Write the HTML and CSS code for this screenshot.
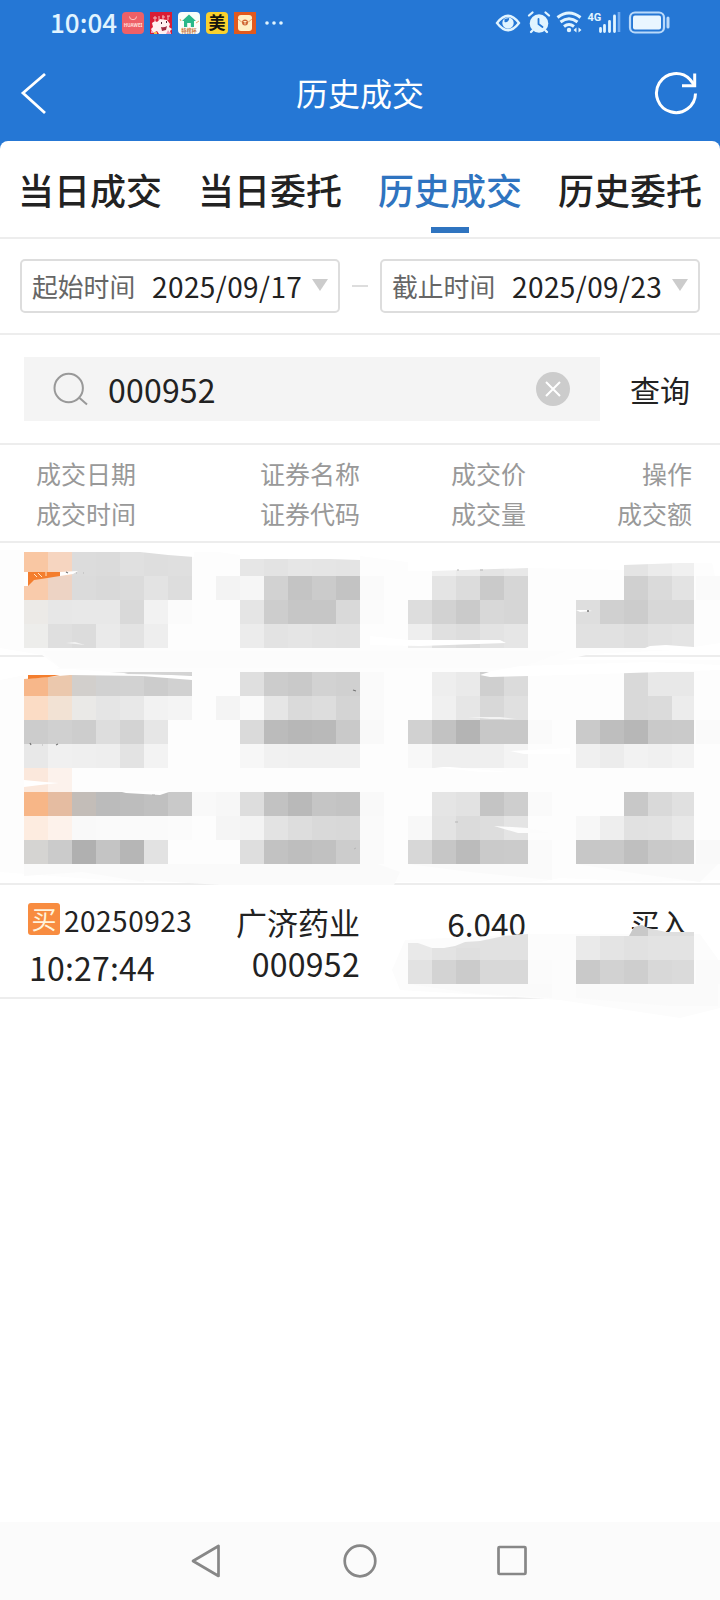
FILE: index.html
```
<!DOCTYPE html>
<html lang="zh-CN">

<head>
    <meta charset="utf-8">
    <meta name="viewport" content="width=device-width, initial-scale=1.0">
    <title>历史成交</title>
    <link rel="stylesheet" href="styles.css">
</head>

<body>
    <header>
        <div class="status-bar">
            <span class="clock">10:04</span>
            <div class="app-icons">
                <svg width="22" height="22" viewBox="0 0 22 22">
                    <rect width="22" height="22" rx="4" fill="#ee6067" />
                    <path d="M7.500 4.500q0 3.200 3.500 3.200t3.500-3.200" fill="none" stroke="#ffc9c4" />
                    <text x="11" y="14.500" class="tiny-latin">HUAWEI</text>
                </svg>
                <svg width="22" height="22" viewBox="0 0 22 22">
                    <rect width="22" height="22" fill="#d91c34" />
                    <path d="M3 6h4M5 4v5M9 4v4M12 5h3M13 3v5M17 4h3M18 4v4" stroke="#f5b7b9" />
                    <path d="M2 11l3-2 2 1 3-3 7 1 3 4-1 3 3 2-2 2 1 3H9l-2-3-4 2-2-4 2-2z" fill="#fff0f0" />
                    <path d="M11 15q3 1 6-1l-1 4-4 1z" fill="#9f2940" />
                    <path d="M11 11h1M16 10h1" stroke="#542638" stroke-width="2" />
                    <path d="M1 21v-3l3 3zM16 22l2-4 3 4z" fill="#ed9ab4" />
                    <path d="M4 20h3v2H4z" fill="#f5c451" />
                </svg>
                <svg width="22" height="22" viewBox="0 0 22 22">
                    <rect width="22" height="22" rx="4" fill="#fafdf9" />
                    <path d="M11 2.500l7 6.500h-2v6h-3.200v-4H9.200v4H6V9H4z" fill="#29b889" />
                    <path d="M2 7l1 2M18 11l3-2" stroke="#eba66a" />
                    <text x="11" y="20.500" class="tiny-cn">特搜杯</text>
                </svg>
                <svg class="overflow" width="22" height="22" viewBox="0 0 22 22">
                    <rect width="22" height="22" rx="4" fill="#fbd12d" />
                    <text x="11" y="17" class="mei">美</text>
                </svg>
                <svg width="22" height="22" viewBox="0 0 22 22">
                    <rect width="22" height="22" fill="#e1591d" />
                    <rect x="4" y="3" width="14" height="16" rx="3" fill="#fff0c5" />
                    <path d="M4 7q3 4 7 3 4 1 7-3" fill="none" stroke="#e9a16c" />
                    <circle cx="11" cy="10.500" r="3" fill="#cf6635" />
                    <path d="M9.500 9.500h3M11 9.500v3" stroke="#fff0c5" />
                </svg>
            </div>
            <svg class="dots" width="20" height="6" viewBox="0 0 20 6" fill="#e1f4ff">
                <circle cx="3" cy="3" r="1.800" />
                <circle cx="10" cy="3" r="1.800" />
                <circle cx="17" cy="3" r="1.800" />
            </svg>
            <svg class="system-icons" width="176" height="26" viewBox="0 0 176 26">
                <path d="M2 13Q13-1.500 24 13 13 27.500 2 13z" fill="none" stroke="#e1f4ff" stroke-width="2.300" />
                <circle cx="13" cy="13" r="5.700" fill="#e1f4ff" />
                <path d="M9.500 9l4.500-1a3.400 3.400 0 0 1-4.500 4z" fill="#2577d5" />
                <g stroke="#e1f4ff" stroke-width="2.300" stroke-linecap="round">
                    <circle cx="44" cy="13.500" r="9.300" fill="#e1f4ff" stroke="none" />
                    <path d="M34 5.500l3.500-3M54 5.500l-3.500-3M37.500 20.500L36 22M50.500 20.500L52 22" />
                    <path d="M43.500 9v5l4 3" fill="none" stroke="#2577d5" stroke-width="1.800" />
                </g>
                <g fill="none" stroke="#e1f4ff" stroke-width="3">
                    <path d="M62.500 7.500q11.500-9 23 0M65.500 12q8.500-6.500 17 0M69 16.500q5-4 10 0" />
                </g>
                <circle cx="74" cy="20" r="2.200" fill="#e1f4ff" />
                <path d="M81.500 17.500v5l-3-2.500zM83.500 17.500v5l3-2.500z" fill="#e1f4ff" />
                <text x="92.500" y="10.500" class="network">4G</text>
                <path d="M105.500 18.500v3M109.500 15.500v6M114.500 11.500v10M119.500 6v15.500" stroke="#e1f4ff" stroke-width="2.800" stroke-linecap="round" />
                <path d="M124 2v20" stroke="#6faaf0" stroke-width="2.600" />
                <rect x="135" y="2.500" width="34" height="20" rx="5" fill="none" stroke="#b9d9fa" stroke-width="2.200" />
                <rect x="138" y="5.500" width="28" height="14" rx="2" fill="#e9f6ff" />
                <path d="M173 8v9" stroke="#b9d9fa" stroke-width="3" stroke-linecap="round" />
            </svg>
        </div>
        <div class="title-bar">
            <svg width="30" height="44" viewBox="0 0 30 44">
                <path d="M27 3L5 22l22 20" fill="none" stroke="#fff" stroke-width="2.800" />
            </svg>
            <h1>历史成交</h1>
            <svg width="44" height="44" viewBox="0 0 44 44" fill="none" stroke="#fff" stroke-width="3">
                <path d="M41.500 22.500A19.500 19.500 0 1 1 36 8.500l4 5" />
                <path d="M40.700 2.500v12.300H28" />
            </svg>
        </div>
    </header>

    <main>
        <nav class="tabs">
            <a>当日成交</a>
            <a>当日委托</a>
            <a class="active">历史成交</a>
            <a>历史委托</a>
        </nav>

        <section class="date-range">
            <div class="date-box">
                <span class="label">起始时间</span>
                <span class="date">2025/09/17</span>
                <i class="arrow"></i>
            </div>
            <span class="dash"></span>
            <div class="date-box">
                <span class="label">截止时间</span>
                <span class="date">2025/09/23</span>
                <i class="arrow"></i>
            </div>
        </section>

        <section class="search">
            <div class="search-box">
                <svg width="36" height="36" viewBox="0 0 36 36" fill="none" stroke="#999" stroke-width="2">
                    <circle cx="16.700" cy="17" r="14.200" />
                    <path d="M27 26.500l8 7" />
                </svg>
                <span class="code">000952</span>
                <svg width="34" height="34" viewBox="0 0 34 34">
                    <circle cx="17" cy="17" r="17" fill="#ccc" />
                    <path d="M10 10l14 14M24 10L10 24" stroke="#fff" stroke-width="2" />
                </svg>
            </div>
            <span class="query">查询</span>
        </section>

        <section class="table">
            <div class="row table-head">
                <div>成交日期<br>成交时间</div>
                <div>证券名称<br>证券代码</div>
                <div>成交价<br>成交量</div>
                <div>操作<br>成交额</div>
            </div>
            <div class="row"></div>
            <div class="row"></div>
            <div class="row"></div>
            <div class="row">
                <div class="when">
                    <div class="day"><span class="badge">买</span>20250923</div>
                    <div class="time">10:27:44</div>
                </div>
                <div class="stock">
                    <div class="stock-name">广济药业</div>
                    <div class="stock-code">000952</div>
                </div>
                <div class="price">6.040</div>
                <div class="side">买入</div>
            </div>
            <!-- mosaic over the private rows -->
            <svg class="mosaic" width="720" height="480" viewBox="0 540 720 480"></svg>
        </section>
    </main>

    <footer>
        <svg width="34" height="38" viewBox="0 0 34 38">
            <path d="M2 19L27.500 4v30z" />
        </svg>
        <svg width="34" height="38" viewBox="0 0 34 38">
            <circle cx="17" cy="19" r="15.300" />
        </svg>
        <svg width="34" height="38" viewBox="0 0 34 38">
            <rect x="3.500" y="5" width="27" height="27" rx="1" />
        </svg>
    </footer>

    <script src="mosaic.js"></script>
</body>

</html>
```
FILE: styles.css
```
html {
    font-family: "Noto Sans CJK SC", sans-serif;
    box-sizing: border-box;
}

*,
*::before,
*::after {
    box-sizing: inherit;
}

body {
    margin: 0px;
    height: 1600px;
    display: flex;
    flex-direction: column;
    background-color: #2577d5;
    color: #222;
}

svg {
    display: block;
    flex: none;
}

header {
    height: 141px;
    color: white;
}

.status-bar {
    height: 46px;
    padding-left: 50px;
    display: flex;
    align-items: center;
}

.clock {
    width: 72px;
    font-size: 26px;
    font-weight: 500;
    line-height: 44px;
    margin-top: -2px;
    color: #e1f4ff;
}

.app-icons {
    display: flex;
    gap: 6px;
}

.overflow {
    overflow: visible;
}

.dots {
    margin-left: 8px;
}

.system-icons {
    margin-left: 211px;
}

.tiny-latin {
    font: bold 4.5px "Noto Sans", sans-serif;
    fill: #ffe2df;
    text-anchor: middle;
}

.tiny-cn {
    font-size: 5.2px;
    font-weight: bold;
    fill: #c9753c;
    text-anchor: middle;
}

.mei {
    font-size: 17px;
    font-weight: bold;
    fill: #15150d;
    text-anchor: middle;
}

.network {
    font: bold 11px "Roboto", sans-serif;
    fill: #e1f4ff;
    text-anchor: start;
}

.title-bar {
    height: 95px;
    padding: 0px 22px 2px 18px;
    display: flex;
    align-items: center;
    justify-content: space-between;
}

h1 {
    margin: -2px 0px 0px 18px;
    font-size: 32px;
    line-height: 48px;
    font-weight: normal;
}

main {
    flex: 1;
    background-color: white;
    border-radius: 8px 8px 0px 0px;
}

.tabs {
    height: 98px;
    display: flex;
    border-bottom: 2px solid #ededed;
}

.tabs a {
    flex: 1;
    position: relative;
    text-align: center;
    font-size: 36px;
    font-weight: 500;
    line-height: 96px;
}

.tabs .active {
    color: #2f74c0;
}

.tabs .active::after {
    content: "";
    position: absolute;
    left: 71px;
    bottom: 4px;
    width: 38px;
    height: 6px;
    background-color: #2f74c0;
}

.date-range {
    height: 96px;
    padding: 0px 20px;
    display: flex;
    align-items: center;
    justify-content: space-between;
    border-bottom: 2px solid #ededed;
}

.date-box {
    width: 320px;
    height: 54px;
    padding: 0px 10px 0px 10px;
    display: flex;
    align-items: center;
    border: 2px solid #ddd;
    border-radius: 5px;
    line-height: 50px;
}

.date-box .label {
    width: 120px;
    font-size: 25.8px;
    color: #666;
}

.date {
    flex: 1;
    font-size: 28px;
    letter-spacing: 0.4px;
}

.arrow {
    margin-top: -2px;
    border: 8px solid transparent;
    border-top: 12px solid #ccc;
    border-bottom: none;
}

.dash {
    width: 16px;
    height: 2px;
    background-color: #ddd;
}

.search {
    height: 110px;
    padding-left: 24px;
    display: flex;
    align-items: center;
    border-bottom: 2px solid #ededed;
}

.search-box {
    width: 576px;
    height: 64px;
    padding: 0px 30px 0px 28px;
    display: flex;
    align-items: center;
    background-color: #f4f4f4;
}

.code {
    flex: 1;
    margin-left: 20px;
    font-size: 32px;
    line-height: 64px;
    letter-spacing: 0.2px;
}

.query {
    margin-left: 30px;
    font-size: 30px;
    line-height: 64px;
}

.table {
    position: relative;
}

.row {
    height: 114px;
    padding: 0px 28px;
    display: grid;
    grid-template-columns: 166px 166px 166px 166px;
    border-bottom: 2px solid #ededed;
    text-align: right;
}

.table-head {
    height: 98px;
    padding: 8px 28px 0px 36px;
    grid-template-columns: 158px 166px 166px 166px;
    font-size: 25px;
    line-height: 40px;
    color: #999;
}

.table-head div:first-child {
    text-align: left;
}

.when {
    padding-top: 12px;
    text-align: left;
}

.day {
    display: flex;
    align-items: center;
    gap: 4px;
    height: 46px;
    font-size: 28px;
    letter-spacing: 0.5px;
    white-space: nowrap;
}

.badge {
    margin-top: -2px;
    width: 32px;
    height: 32px;
    border-radius: 3px;
    background-color: #f88c40;
    color: #fff3dc;
    font-size: 25px;
    line-height: 31px;
    text-align: center;
    letter-spacing: 0px;
}

.time {
    padding-left: 1px;
    font-size: 32px;
    line-height: 48px;
    letter-spacing: 0.2px;
}

.stock {
    padding-top: 14px;
}

.stock-name {
    font-size: 31px;
    line-height: 46px;
}

.stock-code {
    margin-top: -5px;
    font-size: 32px;
    line-height: 46px;
    letter-spacing: 0.3px;
}

.price {
    padding-top: 18px;
    font-size: 31.5px;
    line-height: 41px;
}

.side {
    padding: 17px 3px 0px 0px;
    font-size: 29.5px;
    line-height: 41px;
}

.mosaic {
    position: absolute;
    left: 0px;
    top: 95px;
}

footer {
    height: 78px;
    padding: 0px 191px;
    display: flex;
    align-items: center;
    justify-content: space-between;
    background-color: #fbfbfb;
}

footer svg {
    fill: none;
    stroke: #878787;
    stroke-width: 2.7px;
    stroke-linejoin: round;
}
```
FILE: mosaic.js
```
const mosaic = document.querySelector(".mosaic");
const cell = 24;
const rightEdge = 694;

// [x, y, colours]: two digits are a grey level
const strips = [
    [24, 552, "f9c7a3 f6d5c0 dc db e0 de df"],
    [240, 552, "e6 e3 e6 e5 e4"],
    [432, 552, "f0 eb e4 e8"],
    [624, 552, "e4 eb f0"],
    [24, 576, "f9cbab edd3c4 db d9 db e3 dd"],
    [216, 576, "f3 f6 d2 c4 cb c3 fa"],
    [432, 576, "e4 dc ca d6"],
    [624, 576, "d0 da e3 fa"],
    [24, 600, "eceae7 e7 e8 e8 d9 f2 fb"],
    [240, 600, "e5 cd c6 c6 d9 fb"],
    [408, 600, "dd d2 ca d8 d6"],
    [576, 600, "de d0 cc d7 d7"],
    [24, 624, "ededeb df dc ea e3 ee"],
    [240, 624, "ec e3 e5 e3 e2"],
    [408, 624, "ee e0 dd e3 e6"],
    [576, 624, "e1 e1 de e2 e4"],
    [24, 672, "f7b78a ebc8ad d2cfcc d1 d2 cc d1"],
    [240, 672, "df cc c9 d2 d0 fa"],
    [432, 672, "ee ea cf db"],
    [624, 672, "d9 e8 e8"],
    [24, 696, "fbdcc5 f2e2d4 eae9e7 e5 e8 f2 f4"],
    [216, 696, "f4 fa e6 da dd d4 fa"],
    [432, 696, "f0 e6 d8 e0"],
    [624, 696, "d9 db ec"],
    [24, 720, "cc d0 cd dd d3 e6"],
    [240, 720, "da bb b7 b9 c9 f9"],
    [408, 720, "d1 c2 b4 c8 c8 fa"],
    [576, 720, "ca be b7 c9 ca fa"],
    [24, 744, "e8 f0 ef ee e3 f3"],
    [240, 744, "f7 f1 f0 f0 f0"],
    [408, 744, "f8 ef ef ef f4"],
    [576, 744, "f0 ec f2 f0 f3"],
    [24, 768, "fbe8dc fcf2ec"],
    [24, 792, "f7b687 e5bca1 c3bdb8 bb bd c0 c9 f9 f7 dd c2 b9 c5 c3 f9"],
    [432, 792, "e5 e2 c4 ce fa"],
    [624, 792, "c8 d9 e0"],
    [24, 816, "fdece0 fdf2eb f9 fa fa fa fb"],
    [216, 816, "f5 f3 e3 dd d9 d8 fa"],
    [408, 816, "f8 e3 db dd e4"],
    [576, 816, "f7 ee e1 e2 e8"],
    [24, 840, "d5d4d2 cb b0 c4 b6 e2"],
    [240, 840, "de c2 be c1 cc fa"],
    [408, 840, "d7 c6 bb ca cb fa"],
    [576, 840, "c7 c8 bf c9 cb f9"],
    [408, 936, "e9 e3 df e1 e1"],
    [576, 936, "ea e4 e1 e3 e3"],
    [408, 960, "e2 d3 cb d8 d8 fb"],
    [576, 960, "c9 d2 ce d8 da fa"]
];

// Soft smears below the cells
const under = [
    ["#fdfdfd", "M0 550L190 548 240 555 360 556 430 565 510 560 580 563 712 562 720 600V648L590 654 566 660H720V880L650 882 560 878 540 882H130L0 872V680L60 668 42 655 0 648z"],
    ["#fcfcfc", "M42 651H566L520 668H60z"],
    ["#fafafa", "M24 864H144V882L82 872 24 876z"],
    ["#fafafa", "M144 864H378L400 872 394 885H220L144 880z"],
    ["#fafafa", "M408 864H552V880L470 872zM576 864H718L700 882 640 874z"],
    ["#fcfcfc", "M392 970L405 940 530 934H700L720 962V1008L680 1018 560 1000 500 996 400 990z"],
    ["#fafafa", "M408 984H552V998L470 993zM576 984H718V1006H670L576 998z"]
];

// White strokes and leftovers on top of the cells
const over = [
    ["#ffffff", "M24 546H360V560L330 559H240V552H194V557L168 555 140 552H24z"],
    ["#ffffff", "M408 548H720V563L680 563 624 565V570L528 568 432 571H408z"],
    ["#f47e2e", "M28 572H60V576L41 579 34 580 28 586z"],
    ["#ffffff", "M24 572H28V586L24 586zM60 572L78 571 73 574 60 576z"],
    ["#f3f3f3", "M66 643L75 642 85 645 76 644z"],
    ["#ffffff", "M24 669H72L110 672 192 676V680L142 676 70 675 24 679z"],
    ["#d4d4d4", "M124 674L132 672H192V675z"],
    ["#f47e2e", "M28 675H60L49 677 28 679z"],
    ["#ffffff", "M370 636L408 640 500 640 506 643 420 646 370 645z"],
    ["#ffffff", "M24 780L45 782 59 783 40 785 24 787z"],
    ["#ffffff", "M118 791L172 791 160 795 126 793z"],
    ["#ffffff", "M492 671L520 666 650 662 720 665V670L600 674 528 676 490 677 480 675z"],
    ["#f3f3f3", "M468 717H500L516 719 490 719z"],
    ["#ffffff", "M510 751L570 748V754H524z"],
    ["#fcfcfc", "M494 826L528 828 550 833 518 833z"],
    ["#ffffff", "M434 767L450 767 510 772 480 772z"],
    ["#ffffff", "M650 646L666 645 694 647 720 643V650H640z"],
    ["#ffffff", "M576 610L588 610 592 611 580 612z"],
    ["#c9c9c9", "M629 936L634 927 642 925 648 928 648 936z"],
    ["#dedede", "M648 928L666 932 694 932V936H648z"]
];

// Scraps of covered digits
const marks = "M66 572l2 1M353 690l3 1M587 611h2M30 743l1 2M56 745l2-1";
const faintMarks = "M76 573h1M83 573h1M354 849l2-1M42 745h1M152 795h3M455 822h3M480 570h3M457 570h2";

function draw(tag, attrs) {
    const elem = document.createElementNS("http://www.w3.org/2000/svg", tag);
    for (let name in attrs) {
        elem.setAttribute(name, attrs[name]);
    }
    mosaic.append(elem);
}

for (let [fill, d] of under) draw("path", { fill, d });

for (let [x, y, colours] of strips) {
    colours.split(" ").forEach((c, i) => {
        const left = x + i * cell;
        const fill = "#" + (c.length == 2 ? c + c + c : c);
        // The last column stops at the right edge of the table
        const width = left == 672 ? rightEdge - left : cell;
        let top = y;
        if (y == 936) {
            // Top edge follows the finger stroke, drawn below
            top = left >= 576 ? 936 : 948;
        }
        draw("rect", { x: left, y: top, width, height: y + cell - top, fill });
    });
}

for (let [fill, d] of over) draw("path", { fill, d });

draw("path", { fill: "#e9e9e9", d: "M408 943L418 943 432 948H408z" });
draw("path", { fill: "#e1e1e1", d: "M444 948L455 946 465 942 480 941 504 936 528 934V948z" });
draw("path", { fill: "none", stroke: "#ffe5c6", d: "M34 574l3 3M38 573l4 4M46 572v4" });
draw("path", { fill: "none", stroke: "#777", "stroke-width": 1.3, d: marks });
draw("path", { fill: "none", stroke: "#b5b5b5", d: faintMarks });
```
